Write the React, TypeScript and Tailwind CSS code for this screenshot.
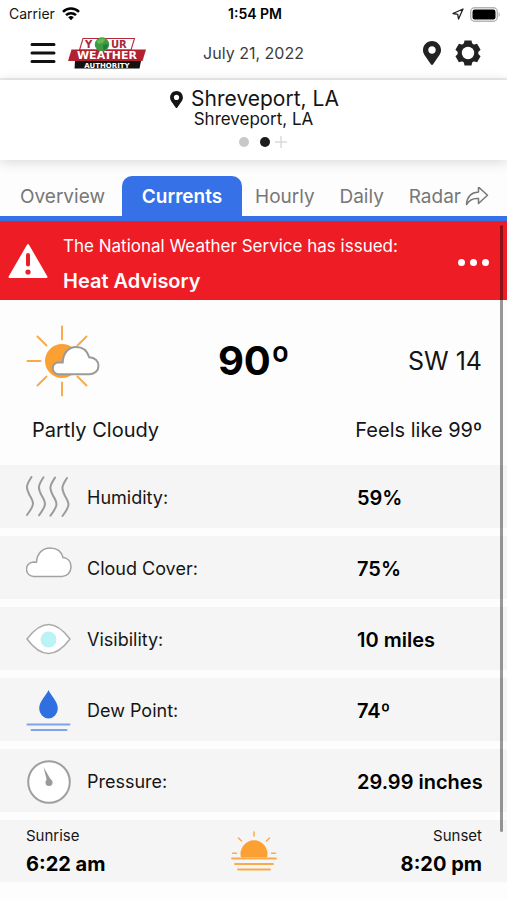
import { useState } from 'react';
import type { ReactNode } from 'react';
import { FaMapMarkerAlt } from 'react-icons/fa';

interface Reading {
  label: string;
  value: string;
  icon: ReactNode;
}

function WifiIcon() {
  return (
    <svg viewBox="0 0 18 14" className="w-[18px] h-[14px]" fill="none" stroke="#000" strokeWidth="2.5">
      <path d="M1 4.9a11.4 11.4 0 0 1 16 0" />
      <path d="M4 8.2a7.2 7.2 0 0 1 10 0" />
      <path d="M9 13.2 6.2 10.3a4 4 0 0 1 5.6 0Z" fill="#000" stroke="none" />
    </svg>
  );
}

function BatteryIcon() {
  return (
    <svg viewBox="0 0 31 15" className="w-[31px] h-[15px]">
      <rect x="0.7" y="0.7" width="26.6" height="13.6" rx="4" fill="#fff" stroke="#b5b5b5" strokeWidth="1.4" />
      <rect x="2.5" y="2.5" width="23" height="10" rx="2.2" fill="#000" />
      <path d="M28.6 5.2c1.6.6 1.6 4 0 4.6Z" fill="#b5b5b5" />
    </svg>
  );
}

function GearIcon() {
  return (
    <svg viewBox="0 0 26 26" className="w-[26px] h-[26px]" fill="#222">
      {[0, 60, 120].map((angle) => (
        <path key={angle} d="M9.500 .5h7l1 4.500v16l-1 4.500h-7L8.500 21V5Z" transform={`rotate(${angle} 13 13)`} />
      ))}
      <circle cx="13" cy="13" r="10.400" />
      <circle cx="13" cy="13" r="6.200" fill="#fff" />
    </svg>
  );
}

function Logo() {
  return (
    <svg viewBox="0 0 78 32" className="w-[78px] h-8" role="img" aria-label="Your Weather Authority">
      <path d="M15 1.500h51.500L63 13H11.500Z" fill="#fff" stroke="#b52a37" strokeWidth="1.100" />
      <path d="M3.500 12.500H78l-3.500 11.500H0Z" fill="#b3202f" />
      <path d="M7 24h66L71.500 31.500H6.500Z" fill="#111" />
      <text x="17" y="10.800" fontFamily="DejaVu Sans" fontWeight="700" fontSize="10" fill="#a8283a">Y</text>
      <text x="43" y="10.800" fontFamily="DejaVu Sans" fontWeight="700" fontSize="10" fill="#a8283a">UR</text>
      <circle cx="34" cy="7.500" r="7.200" fill="#3c9a45" />
      <path d="M28.500 4.500c2-3 6-4 9-2l-3 3.500-4 1Z" fill="#69b84f" />
      <path d="M35 8l5-1c0 3-2 5.500-4.500 6.400Z" fill="#27793a" />
      <text x="39" y="22.300" textAnchor="middle" fontFamily="DejaVu Sans" fontWeight="700" fontSize="11" fill="#fff">WEATHER</text>
      <text x="39" y="30.500" textAnchor="middle" fontFamily="DejaVu Sans" fontWeight="700" fontSize="7" fill="#fff">AUTHORITY</text>
    </svg>
  );
}

function PartlyCloudyIcon() {
  return (
    <svg viewBox="0 0 74 72" className="w-[74px] h-[72px]" fill="none">
      <circle cx="36" cy="36" r="17" fill="#fba133" />
      <path
        d="M36 1.500v13M36 57.500v13M1.500 36h13M11.500 11.500l9 9M60.500 11.500l-9 9M11.500 60.500l9-9M60.500 60.500l-9-9"
        stroke="#f9ab4c"
        strokeWidth="2"
        strokeLinecap="round"
      />
      <path
        d="M33 49.200a6 6 0 0 1-.5-12c1.200 0 2.300 0 4.200.2C37 27.500 43 22 50 22c7 0 11.500 4.500 13.200 10.200 5.500.3 9.300 3.800 9.300 8.500 0 5-3.800 8.500-8.800 8.500Z"
        fill="#fff"
        stroke="#9a9a9a"
        strokeWidth="2"
      />
    </svg>
  );
}

function HumidityIcon() {
  return (
    <svg viewBox="0 0 46 44" className="w-[46px] h-11" fill="none" stroke="#9b9b9b" strokeWidth="2" strokeLinecap="round">
      <path d="M5.500 1c-6 9-5.500 11-2 18 5 8 5 10-2.500 20" />
      <path d="M17.500 1.300c-6 9-5.500 11-2 18 5 8 5 10-2.500 20" />
      <path d="M29 1.600c-6 9-5.500 11-2 18 5 8 5 10-2.500 20" />
      <path d="M41 2c-6 9-5.500 11-2 18 5 8 5 10-2.500 20" />
    </svg>
  );
}

function CloudIcon() {
  return (
    <svg viewBox="0 0 46 44" className="w-[46px] h-11">
      <path
        d="M8 29.500a7.200 7.200 0 0 1-.5-14.500c1 0 2 0 3 .2C11 6 17 1 24 1c6.500 0 11.500 3.500 13 9.500 5 .5 8 4.300 8 9.200 0 6-4 9.800-9 9.800Z"
        fill="#fff"
        stroke="#a2a2a2"
        strokeWidth="1.500"
      />
    </svg>
  );
}

function EyeIcon() {
  return (
    <svg viewBox="0 0 46 44" className="w-[46px] h-11">
      <path
        d="M1 21C7 13 14 6.500 22.500 6.500S38 13 44 21C38 29 31 35.500 22.500 35.500S7 29 1 21Z"
        fill="#fff"
        stroke="#ababab"
        strokeWidth="1.500"
        strokeLinejoin="round"
      />
      <circle cx="22.500" cy="21.500" r="8" fill="#b9f3f3" />
    </svg>
  );
}

function DewPointIcon() {
  return (
    <svg viewBox="0 0 46 44" className="w-[46px] h-11">
      <path d="M22.500 1C20 7 13.200 12 13.200 19.500a9.300 10 0 0 0 18.600 0C31.800 12 25 7 22.500 1Z" fill="#2f6fe0" />
      <path d="M1.500 35.500h42M5.500 41h35" stroke="#7da4ea" strokeWidth="2" strokeLinecap="round" />
    </svg>
  );
}

function PressureIcon() {
  return (
    <svg viewBox="0 0 46 44" className="w-[46px] h-11">
      <circle cx="23" cy="22" r="20.800" fill="#fff" stroke="#9f9f9f" strokeWidth="2" />
      <circle cx="23" cy="22.500" r="3.500" fill="#9a9a9a" />
      <path d="M17.500 7l8 14-4 2Z" fill="#9a9a9a" />
    </svg>
  );
}

function SunsetIcon() {
  return (
    <svg viewBox="0 0 46 40" className="w-[46px] h-10" fill="none" stroke="#f9ab4c" strokeWidth="1.800" strokeLinecap="round">
      <path d="M10 26.500a13.500 13.500 0 1 1 26 0Z" fill="#fba133" stroke="none" />
      <path d="M1 27.500h44M4 33h38M7 38.500h32" />
      <path d="M1.500 22.300h4M40.500 22.300h4M7.500 7l3 3M38.500 7l-3 3M23 1v4" strokeWidth="1.500" />
    </svg>
  );
}

const tabs = ['Overview', 'Currents', 'Hourly', 'Daily', 'Radar'];

const readings: Reading[] = [
  { label: 'Humidity:', value: '59%', icon: <HumidityIcon /> },
  { label: 'Cloud Cover:', value: '75%', icon: <CloudIcon /> },
  { label: 'Visibility:', value: '10 miles', icon: <EyeIcon /> },
  { label: 'Dew Point:', value: '74º', icon: <DewPointIcon /> },
  { label: 'Pressure:', value: '29.99 inches', icon: <PressureIcon /> },
];

export default function App() {
  const [activeTab, setActiveTab] = useState('Currents');

  return (
    <div className="min-h-screen bg-[#fdfdfd] font-['Inter',sans-serif] text-[#151515]">
      {/* Status bar */}
      <div className="grid grid-cols-[1fr_auto_1fr] items-center h-7 pl-[9px] pr-[6px] bg-white text-[14px] leading-5">
        <div className="flex items-center gap-[7px]">
          Carrier
          <WifiIcon />
        </div>
        <div className="font-semibold text-black">1:54 PM</div>
        <div className="flex items-center justify-end gap-[6px]">
          <svg viewBox="0 0 12 12" className="w-3 h-3" fill="none" stroke="#222" strokeWidth="1.300" strokeLinejoin="round">
            <path d="M11 1 1 5.500l4.700.8.8 4.700Z" />
          </svg>
          <BatteryIcon />
        </div>
      </div>

      {/* Header */}
      <header className="grid grid-cols-[1fr_auto_1fr] items-center h-[52px] px-[26px] bg-white border-b-2 border-[#ececec]">
        <div className="flex items-center gap-3">
          <button aria-label="Menu" className="pl-1">
            <svg viewBox="0 0 26 22" className="w-[26px] h-[22px]" stroke="#111" strokeWidth="3" strokeLinecap="round">
              <path d="M2 2.500h22M2 11h22M2 19.500h22" />
            </svg>
          </button>
          <Logo />
        </div>
        <div className="text-[16px] leading-5 text-[#3c3c3c]">July 21, 2022</div>
        <div className="flex items-center justify-end gap-[14px] text-[#222]">
          <button aria-label="Locations"><FaMapMarkerAlt className="w-[18px] h-6" /></button>
          <button aria-label="Settings"><GearIcon /></button>
        </div>
      </header>

      {/* Location */}
      <section className="flex flex-col items-center h-20 pt-2 bg-white shadow-[0_2px_12px_rgba(0,0,0,0.15)]">
        <h1 className="flex items-center gap-2 pl-[2px] text-[21px] leading-[22px]">
          <FaMapMarkerAlt className="w-[13px] h-[17px]" />
          Shreveport, LA
        </h1>
        <p className="text-[17px] leading-[18px]">Shreveport, LA</p>
        <div className="flex items-center mt-2 pl-[18px]">
          <button aria-label="First location" className="w-[10px] h-[10px] mr-[11px] rounded-full bg-[#c8c8c8]" />
          <button aria-label="Second location" aria-current="true" className="w-[10px] h-[10px] mr-[5px] rounded-full bg-[#1c1c1c]" />
          <button aria-label="Add location">
            <svg viewBox="0 0 12 12" className="w-3 h-3" stroke="#dadada" strokeWidth="1.500">
              <path d="M6 0v12M0 6h12" />
            </svg>
          </button>
        </div>
      </section>

      {/* Tabs */}
      <nav className="flex justify-between pt-4 pl-2 pr-[6px] border-b-[5px] border-[#3671e8]">
        {tabs.map((tab) => (
          <button
            key={tab}
            onClick={() => setActiveTab(tab)}
            className={`flex items-center gap-1 h-10 pt-[2px] rounded-t-[10px] text-[19px] leading-6 ${
              activeTab === tab ? 'ml-1 px-5 bg-[#3671e8] text-white font-semibold' : 'px-3 text-[#777]'
            }`}
          >
            {tab}
            {tab === 'Radar' && (
              <svg viewBox="0 0 24 20" className="w-6 h-5" fill="none" stroke="#777" strokeWidth="1.500" strokeLinejoin="round">
                <path d="M13.500 0 22.500 8.300l-9 8.200v-5C8 11 4.500 12.500 1.500 17.500 2 9.500 6 5.500 13.500 5Z" />
              </svg>
            )}
          </button>
        ))}
      </nav>

      <main className="relative">
        {/* Alert */}
        <section className="flex items-center h-[79px] pl-2 pr-[18px] bg-[#ee1c25] text-white">
          <svg viewBox="0 0 40 36" className="w-10 h-9">
            <path d="M20 2 38.500 34h-37Z" fill="#fff" stroke="#fff" strokeWidth="2" strokeLinejoin="round" />
            <path d="M20 12v9.500" stroke="#ee1c25" strokeWidth="4" strokeLinecap="round" />
            <circle cx="20" cy="29" r="2.600" fill="#ee1c25" />
          </svg>
          <div className="flex-1 pl-[15px] pt-[6px]">
            <p className="text-[17px] leading-6">The National Weather Service has issued:</p>
            <h2 className="mt-[11px] text-[20px] leading-6 font-semibold">Heat Advisory</h2>
          </div>
          <button aria-label="More" className="flex gap-[5px] pt-1">
            <span className="w-[7px] h-[7px] rounded-full bg-white" />
            <span className="w-[7px] h-[7px] rounded-full bg-white" />
            <span className="w-[7px] h-[7px] rounded-full bg-white" />
          </button>
        </section>

        {/* Current conditions */}
        <section className="pl-[26px] pr-[25px] pt-[25px] pb-[22px]">
          <div className="grid grid-cols-[1fr_auto_1fr] items-center">
            <PartlyCloudyIcon />
            <div className="text-[40px] leading-[48px] font-bold text-black">90º</div>
            <div className="text-right text-[25px] leading-8">SW 14</div>
          </div>
          <div className="flex justify-between mt-5 pl-[6px] text-[20px] leading-[26px]">
            <span>Partly Cloudy</span>
            <span>Feels like 99º</span>
          </div>
        </section>

        <dl className="flex flex-col gap-2">
          {readings.map((r) => (
            <div key={r.label} className="flex items-center h-[63px] pl-[26px] pr-[25px] pt-[2px] bg-[#f5f5f5]">
              {r.icon}
              <dt className="flex-1 pl-[15px] text-[18px] leading-6">{r.label}</dt>
              <dd className="w-[125px] text-[20px] leading-6 font-semibold whitespace-nowrap text-black">{r.value}</dd>
            </div>
          ))}
        </dl>

        {/* Sunrise and sunset */}
        <section className="grid grid-cols-[1fr_auto_1fr] items-center h-[62px] mt-2 pl-[26px] pr-[25px] bg-[#f5f5f5]">
          <div>
            <p className="text-[15px] leading-5">Sunrise</p>
            <p className="mt-[6px] text-[20px] leading-6 font-bold text-black">6:22 am</p>
          </div>
          <SunsetIcon />
          <div className="text-right">
            <p className="text-[15px] leading-5">Sunset</p>
            <p className="mt-[6px] text-[20px] leading-6 font-bold text-black">8:20 pm</p>
          </div>
        </section>

        {/* Scroll indicator */}
        <div className="absolute top-1 right-1 bottom-[50px] w-[3px] rounded-full bg-black/40" />
      </main>
    </div>
  );
}
